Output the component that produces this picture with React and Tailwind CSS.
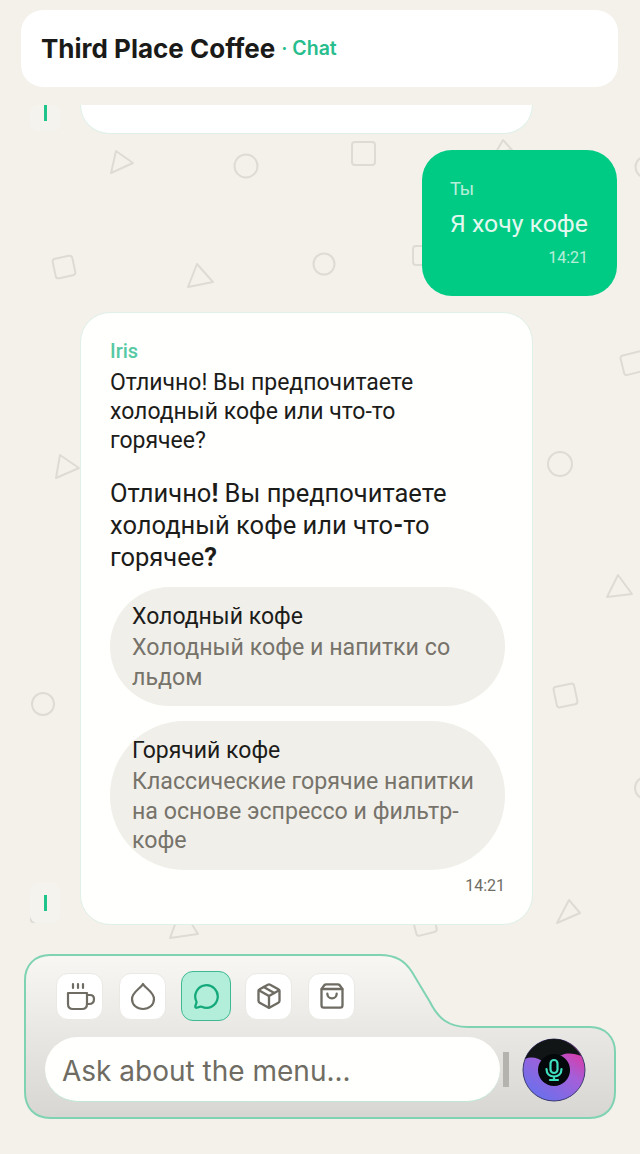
import { MessageCircle, Package, ShoppingBag } from 'lucide-react';

const triangles = [
  'M116 151 L133 163 L111 173 Z',
  'M197 264 L213 282 L188 287 Z',
  'M60 455 L79 468 L56 478 Z',
  'M618 575 L632 594 L607 597 Z',
  'M569 900 L580 913 L557 923 Z',
  'M176 922 L188 918 L198 934 L170 938 Z',
  'M503 140 L512 150 L496 152 Z',
];
const circles = [
  [246, 166, 11.5],
  [324, 264, 10.5],
  [560, 464, 12],
  [43, 704, 11],
  [646, 167, 10.5],
  [646, 788, 11],
];
const squares = [
  [352, 142, 23, 23, 0],
  [54, 257, 20, 20, -12],
  [413, 246, 12, 19, 0],
  [622, 353, 24, 20, -14],
  [555, 685, 21, 21, -12],
  [415, 920, 21, 14, -14],
];

function Pattern() {
  return (
    <svg className="absolute inset-0" width="640" height="1154" fill="none" stroke="#dedbd5" strokeWidth="2" strokeLinejoin="round">
      {triangles.map((d) => <path key={d} d={d} />)}
      {circles.map(([cx, cy, r]) => <circle key={cx + '-' + cy} cx={cx} cy={cy} r={r} />)}
      {squares.map(([x, y, w, h, r]) => (
        <rect key={x + '-' + y} x={x} y={y} width={w} height={h} rx="3" transform={`rotate(${r} ${x + w / 2} ${y + h / 2})`} />
      ))}
      <path d="M31 916 V920 Q31 922 33 922 L38 921" />
    </svg>
  );
}

function Avatar({ className }) {
  return (
    <div className={`w-[30px] ml-[30px] shrink-0 flex justify-center rounded-lg bg-[#f5f3ee] ${className}`}>
      <span className="block w-[3px] h-[16px] bg-[#1fc48a]" />
    </div>
  );
}

function Choice({ title, desc }) {
  return (
    <div className="bg-[#f1efea] rounded-[74px] pl-[22px] pr-[24px] pt-[14px] pb-[14px]">
      <div className="text-[23px] leading-[32px] text-[#1c1c1a] whitespace-nowrap">{title}</div>
      <div className="text-[23.2px] leading-[29.5px] text-[#76736a] whitespace-nowrap">{desc}</div>
    </div>
  );
}

function CoffeeIcon() {
  return (
    <svg width="32" height="32" viewBox="0 0 32 32" fill="none" stroke="currentColor" strokeWidth="2.2" strokeLinecap="round" strokeLinejoin="round">
      <path d="M4 13 H23 V24 C23 27 21 29 18 29 H9 C6 29 4 27 4 24 Z" />
      <path d="M23 15 H26 C29 15 30 17 30 19 C30 22 28 24 25 24 H23" />
      <path d="M9 4 V8 M14 4 V8 M19 4 V8" />
    </svg>
  );
}

function DropIcon() {
  return (
    <svg width="26" height="30" viewBox="0 0 26 30" fill="none" stroke="currentColor" strokeWidth="2.2" strokeLinejoin="round">
      <path d="M13 3 C15 7 24 11 24 18 C24 24 19 28 13 28 C7 28 2 24 2 18 C2 11 11 7 13 3 Z" />
    </svg>
  );
}

function MicOrb() {
  return (
    <svg className="ml-[13px] shrink-0" width="64" height="64" viewBox="-32 -32 64 64">
      <defs>
        <linearGradient id="orbFill" x1="1" y1="0" x2="0.3" y2="1">
          <stop offset="0.1" stopColor="#e8319a" />
          <stop offset="0.5" stopColor="#a45fd9" />
          <stop offset="1" stopColor="#6a70ec" />
        </linearGradient>
      </defs>
      <circle r="31" fill="url(#orbFill)" stroke="#3b3a70" strokeWidth="1" />
      <path d="M-29 -11 C-22 -14 -16 -12 -10 -8 L8 -15 C14 -18 22 -16 27 -14 C21 -25 11 -31 0 -31 C-13 -31 -24 -23 -29 -11 Z" fill="#111516" />
      <circle r="16" fill="#05080a" />
      <g fill="none" stroke="#3fe0c0" strokeWidth="2.2" strokeLinecap="round">
        <rect x="-3.5" y="-10" width="7" height="13" rx="3.5" />
        <path d="M-7.5 -1 C-7.5 4 -4 6.5 0 6.5 C4 6.5 7.5 4 7.5 -1 M0 6.5 V10 M-4 10 H4" />
      </g>
    </svg>
  );
}

function ToolButton({ children, active, className }) {
  return (
    <button
      className={`flex items-center justify-center rounded-xl border ${active
        ? 'w-[50px] h-[50px] bg-[#b2eeda] border-[#3fb893] text-[#14a97a]'
        : 'w-[47px] h-[47px] bg-white border-[#ebe9e4] text-[#6f6c63]'} ${className || ''}`}
    >
      {children}
    </button>
  );
}

export default function App() {
  return (
    <div className="relative w-[640px] h-[1154px] overflow-hidden bg-[#f4f1eb] font-['Roboto',sans-serif]">
      <Pattern />

      <div className="relative flex flex-col h-full">
        <header className="mt-[10px] mx-[21px] w-[597px] h-[77px] shrink-0 flex items-center pl-[20px] rounded-[22px] bg-white">
          <h1 className="font-['Inter',sans-serif] font-bold text-[26px] text-[#1a1a18] whitespace-nowrap">Third Place Coffee</h1>
          <span className="ml-[6px] mt-[1px] font-['Inter',sans-serif] font-semibold text-[19.5px] text-[#27bd8c]">· Chat</span>
        </header>

        <main className="mt-[18px] h-[835px] shrink-0 overflow-hidden">
          <div className="flex h-[29px]">
            <Avatar className="h-[26px] items-start" />
            <div className="ml-[20px] w-[453px] h-[29px] bg-white border border-t-0 border-[#dff0e8] rounded-b-[30px]" />
          </div>

          <div className="mt-[16px] ml-[422px] w-[195px] h-[146px] bg-[#00cb85] rounded-[30px] pl-[28px] pr-[29px] pt-[27px] text-[#e3f8ef]">
            <div className="text-[18.5px] leading-[24px] opacity-80">Ты</div>
            <div className="mt-[6px] text-[24.8px] leading-[34px] whitespace-nowrap">Я хочу кофе</div>
            <div className="mt-[6px] text-right text-[16px] leading-[22px] opacity-80">14:21</div>
          </div>

          <div className="mt-[16px] flex items-end">
            <Avatar className="h-[40px] items-center mb-[2px]" />
            <div className="ml-[20px] w-[453px] h-[613px] bg-[#fffffd] border border-[#dff0e8] rounded-[30px] pl-[29px] pr-[27px] pt-[26px]">
              <div className="text-[20px] leading-[24px] font-medium text-[#55c9a3]">Iris</div>
              <p className="mt-[5px] text-[23px] leading-[29px] text-[#1c1c1a] whitespace-nowrap">Отлично! Вы предпочитаете<br />холодный кофе или что-то<br />горячее?</p>
              <p className="mt-[22px] text-[25.5px] leading-[32px] text-[#1c1c1a] whitespace-nowrap">Отлично<b>!</b> Вы предпочитаете<br />холодный кофе или что<b>-</b>то<br />горячее<b>?</b></p>
              <div className="mt-[14px] flex flex-col gap-[15px]">
                <Choice title="Холодный кофе" desc={<>Холодный кофе и напитки со<br />льдом</>} />
                <Choice title="Горячий кофе" desc={<>Классические горячие напитки<br />на основе эспрессо и фильтр-<br />кофе</>} />
              </div>
              <div className="mt-[5px] text-right text-[16px] leading-[22px] text-[#6f6c63]">14:21</div>
            </div>
          </div>
        </main>

        <section className="relative mt-[14px] ml-[24px] w-[592px] h-[165px] shrink-0">
          <svg className="absolute inset-0" width="592" height="165" fill="none">
            <defs>
              <linearGradient id="composerFill" x1="0" y1="0" x2="0" y2="1">
                <stop offset="0" stopColor="#f8f7f3" />
                <stop offset="1" stopColor="#d8d6d2" />
              </linearGradient>
            </defs>
            <path
              d="M26 1 H356 C372 1 381 7 388 18 L406 48 C414 64 424 73 444 73 H566 C581 73 591 83 591 98 V138 C591 154 581 164 566 164 H26 C11 164 1 154 1 138 V26 C1 11 11 1 26 1 Z"
              fill="url(#composerFill)"
              stroke="#7fd3b2"
              strokeWidth="2"
            />
          </svg>
          <div className="relative flex flex-col pt-[17px] pl-[21px]">
            <div className="flex items-center h-[50px] ml-[11px]">
              <ToolButton><CoffeeIcon /></ToolButton>
              <ToolButton className="ml-[16px]"><DropIcon /></ToolButton>
              <ToolButton active className="ml-[15px]"><MessageCircle size={27} strokeWidth={2} /></ToolButton>
              <ToolButton className="ml-[14px]"><Package size={28} strokeWidth={2} /></ToolButton>
              <ToolButton className="ml-[16px]"><ShoppingBag size={28} strokeWidth={2} /></ToolButton>
            </div>
            <div className="mt-[16px] flex items-center">
              <div className="w-[455px] h-[65px] flex items-center pl-[17px] pt-[3px] bg-[#fffffd] border-b border-[#bfe6d6] rounded-full font-['Inter',sans-serif] text-[28px] text-[#6f6c63]">
                Ask about the menu...
              </div>
              <div className="ml-[3px] w-[6px] h-[35px] bg-[#b5b3ae]" />
              <MicOrb />
            </div>
          </div>
        </section>
      </div>
    </div>
  );
}
